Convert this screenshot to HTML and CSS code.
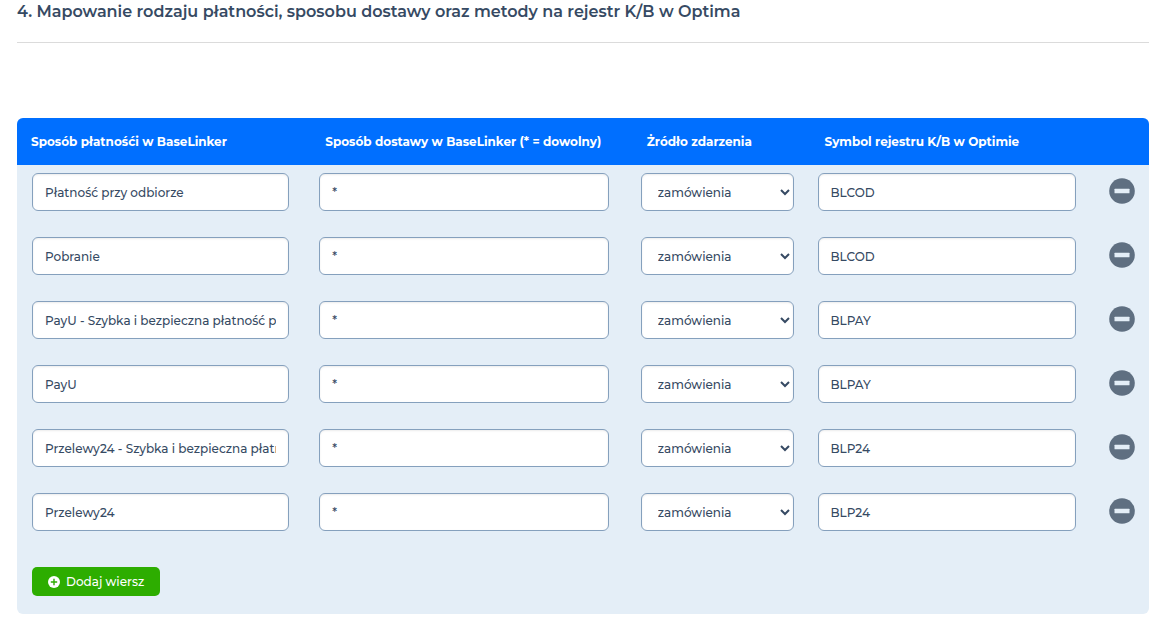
FILE: index.html
```html
<!DOCTYPE html>
<html lang="pl">
<head>
<meta charset="utf-8">
<meta name="viewport" content="width=device-width, initial-scale=1">
<title>Mapowanie płatności</title>
<link rel="stylesheet" href="styles.css">
</head>
<body>
<svg class="sprite" aria-hidden="true">
  <symbol id="minus" viewBox="0 0 26 26"><circle cx="13" cy="13" r="12.8" fill="#5f6f81"/><rect x="5.5" y="10.8" width="15" height="4.4" rx=".5" fill="#e4eef7"/></symbol>
  <symbol id="plus" viewBox="0 0 12 12"><circle cx="6" cy="6" r="6" fill="#fff"/><path d="M6 2.8v6.4M2.8 6h6.4" stroke="#2dad00" stroke-width="1.4"/></symbol>
</svg>
<main class="page">
  <h2 class="title">4. Mapowanie rodzaju płatności, sposobu dostawy oraz metody na rejestr K/B w Optima</h2>
  <form class="panel">
    <table class="mapping">
      <colgroup><col class="col-payment"><col class="col-delivery"><col class="col-source"><col class="col-symbol"><col class="col-remove"></colgroup>
      <thead>
        <tr><th scope="col">Sposób płatnośći w BaseLinker</th><th scope="col">Sposób dostawy w BaseLinker (* = dowolny)</th><th scope="col">Żródło zdarzenia</th><th scope="col">Symbol rejestru K/B w Optimie</th><td></td></tr>
      </thead>
      <tbody>
        <tr>
          <td><input class="field" type="text" aria-label="Sposób płatności" value="Płatność przy odbiorze"></td>
          <td><input class="field" type="text" aria-label="Sposób dostawy" value="*"></td>
          <td><select class="field" aria-label="Źródło zdarzenia"><option>zamówienia</option></select></td>
          <td><input class="field" type="text" aria-label="Symbol rejestru" value="BLCOD"></td>
          <td><button class="remove" type="button" aria-label="Usuń wiersz"><svg class="remove-icon"><use href="#minus"/></svg></button></td>
        </tr>
        <tr>
          <td><input class="field" type="text" aria-label="Sposób płatności" value="Pobranie"></td>
          <td><input class="field" type="text" aria-label="Sposób dostawy" value="*"></td>
          <td><select class="field" aria-label="Źródło zdarzenia"><option>zamówienia</option></select></td>
          <td><input class="field" type="text" aria-label="Symbol rejestru" value="BLCOD"></td>
          <td><button class="remove" type="button" aria-label="Usuń wiersz"><svg class="remove-icon"><use href="#minus"/></svg></button></td>
        </tr>
        <tr>
          <td><input class="field" type="text" aria-label="Sposób płatności" value="PayU - Szybka i bezpieczna płatność przez"></td>
          <td><input class="field" type="text" aria-label="Sposób dostawy" value="*"></td>
          <td><select class="field" aria-label="Źródło zdarzenia"><option>zamówienia</option></select></td>
          <td><input class="field" type="text" aria-label="Symbol rejestru" value="BLPAY"></td>
          <td><button class="remove" type="button" aria-label="Usuń wiersz"><svg class="remove-icon"><use href="#minus"/></svg></button></td>
        </tr>
        <tr>
          <td><input class="field" type="text" aria-label="Sposób płatności" value="PayU"></td>
          <td><input class="field" type="text" aria-label="Sposób dostawy" value="*"></td>
          <td><select class="field" aria-label="Źródło zdarzenia"><option>zamówienia</option></select></td>
          <td><input class="field" type="text" aria-label="Symbol rejestru" value="BLPAY"></td>
          <td><button class="remove" type="button" aria-label="Usuń wiersz"><svg class="remove-icon"><use href="#minus"/></svg></button></td>
        </tr>
        <tr>
          <td><input class="field" type="text" aria-label="Sposób płatności" value="Przelewy24 - Szybka i bezpieczna płatność"></td>
          <td><input class="field" type="text" aria-label="Sposób dostawy" value="*"></td>
          <td><select class="field" aria-label="Źródło zdarzenia"><option>zamówienia</option></select></td>
          <td><input class="field" type="text" aria-label="Symbol rejestru" value="BLP24"></td>
          <td><button class="remove" type="button" aria-label="Usuń wiersz"><svg class="remove-icon"><use href="#minus"/></svg></button></td>
        </tr>
        <tr>
          <td><input class="field" type="text" aria-label="Sposób płatności" value="Przelewy24"></td>
          <td><input class="field" type="text" aria-label="Sposób dostawy" value="*"></td>
          <td><select class="field" aria-label="Źródło zdarzenia"><option>zamówienia</option></select></td>
          <td><input class="field" type="text" aria-label="Symbol rejestru" value="BLP24"></td>
          <td><button class="remove" type="button" aria-label="Usuń wiersz"><svg class="remove-icon"><use href="#minus"/></svg></button></td>
        </tr>
      </tbody>
    </table>
    <div class="actions">
      <button class="add" type="button"><svg class="add-icon"><use href="#plus"/></svg>Dodaj wiersz</button>
    </div>
  </form>
</main>
</body>
</html>
```
FILE: styles.css
```css
* { box-sizing: border-box; }

body {
  margin: 0;
  background: #fff;
  color: #364a63;
  font: 500 12px/18px Montserrat, Inter, "Open Sans", sans-serif;
}

.sprite { display: none; }

.page { padding: 0 13px 15px 17px; }

.title {
  margin: 0 0 75px;
  padding-bottom: 18px;
  border-bottom: 1px solid #dbdbdb;
  font-size: 16px;
  line-height: 24px;
  font-weight: 600;
}

.panel {
  overflow: hidden;
  border-radius: 6px;
  background: #e4eef7;
}

.mapping {
  width: 100%;
  table-layout: fixed;
  border-collapse: collapse;
}

.col-payment { width: 26%; }
.col-delivery { width: 28.4%; }
.col-source { width: 15.7%; }
.col-symbol { width: 25%; }
.col-remove { width: 4.9%; }

.mapping thead { background: #006fff; color: #fff; }

.mapping th {
  height: 47px;
  padding: 0 0 0 14px;
  font-size: 12px;
  font-weight: 700;
  text-align: left;
  white-space: nowrap;
}

.mapping tbody td {
  padding: 8px 18px 18px 8px;
  vertical-align: top;
}

.mapping tbody td:nth-child(1) { padding-left: 15px; padding-right: 22px; }
.mapping tbody td:nth-child(2) { padding-right: 24px; }
.mapping tbody td:nth-child(3) { padding-right: 17px; }
.mapping tbody td:nth-child(4) { padding-left: 7px; }
.mapping tbody td:nth-child(5) { padding-left: 0; padding-right: 14px; text-align: right; }

.field {
  display: block;
  width: 100%;
  height: 38px;
  padding: 0 12px;
  border: 1px solid #85a0bd;
  border-radius: 6px;
  background-color: #fff;
  box-shadow: inset 0 1px 2px rgba(0, 0, 0, .08);
  color: inherit;
  font: inherit;
}

select.field { padding-right: 1px; }

.remove {
  display: inline-block;
  padding: 5px 0;
  border: 0;
  background: none;
  cursor: pointer;
}

.remove-icon { display: block; width: 26px; height: 26px; }

.actions { padding: 18px 15px; }

.add {
  display: flex;
  align-items: center;
  gap: 6px;
  height: 29px;
  padding: 0 16px;
  border: 0;
  border-radius: 5px;
  background: #2dad00;
  color: #fff;
  font: inherit;
  cursor: pointer;
}

.add-icon { width: 12px; height: 12px; }
```
